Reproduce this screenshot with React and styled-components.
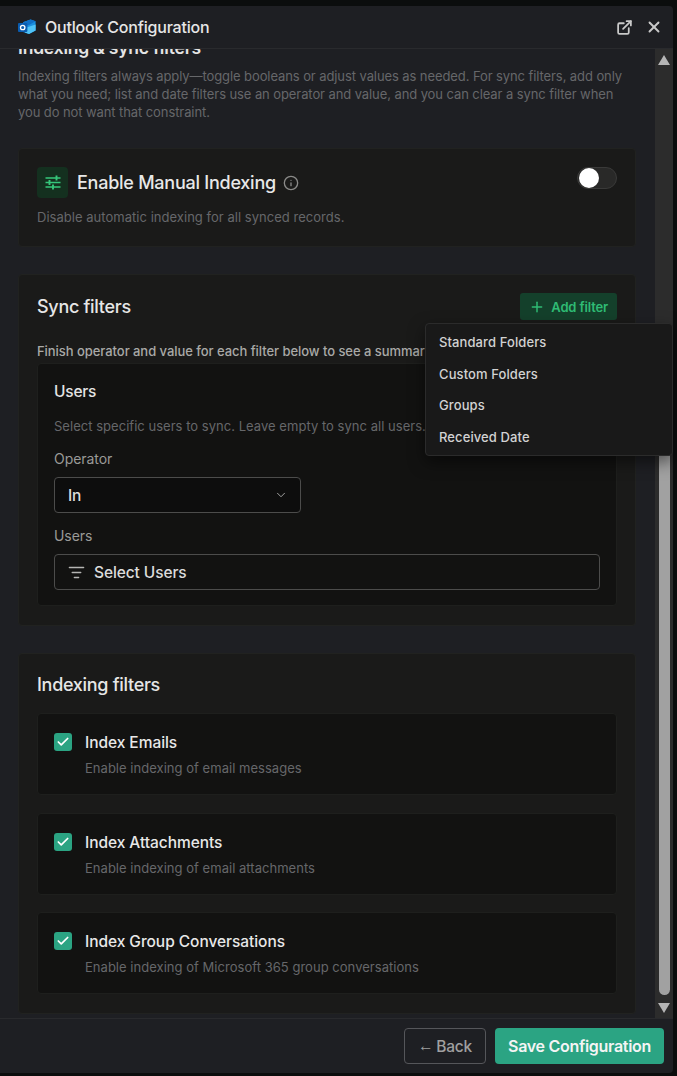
import React from 'react';
import styled, { createGlobalStyle } from 'styled-components';
import { ExternalLink, X, Info, Plus, ChevronDown, ListFilter, Check } from 'lucide-react';

const GlobalStyle = createGlobalStyle`
	html, body {
		margin: 0;
		height: 100%;
		background: #0b0d0d;
		font-family: "Inter", "Noto Sans", sans-serif;
		overflow: hidden;
	}
	* {
		box-sizing: border-box;
	}
`;

const Page = styled.div`
	height: 1076px;
	padding: 6px 4px 3px 0;
`;

const Dialog = styled.div`
	position: relative;
	height: 100%;
	display: flex;
	flex-direction: column;
	background: #1e1f23;
	border-radius: 0 4px 4px 0;
`;

const Header = styled.div`
	height: 43px;
	flex-shrink: 0;
	display: flex;
	align-items: center;
	padding: 0 10px 0 18px;
	border-bottom: 1px solid #292a2d;
`;

const Title = styled.div`
	margin-left: 9px;
	flex: 1;
	font-size: 16px;
	font-weight: 500;
	letter-spacing: -0.2px;
	color: #e6e6e6;
`;

const HeaderButton = styled.div`
	display: flex;
	margin-left: 12px;
	color: #c9c9c9;
`;

const Body = styled.div`
	flex: 1;
	min-height: 0;
	display: flex;
`;

const Content = styled.div`
	flex: 1;
	min-width: 0;
	overflow: hidden;
	padding: 0 19px 0 18px;
`;

const Heading = styled.h2`
	margin: -11px 0 0;
	font-size: 17.5px;
	line-height: 20px;
	font-weight: 600;
	letter-spacing: -0.2px;
	color: #e4e4e4;
`;

const Intro = styled.p`
	margin: 9px 0 27px;
	font-size: 13px;
	line-height: 18px;
	letter-spacing: -0.09px;
	color: #66676a;
`;

const Card = styled.section`
	background: #1a1a19;
	border: 1px solid #212220;
	border-radius: 4px;
	padding: ${p => p.$padding || '18px'};
	margin-bottom: ${p => p.$bottom || '28px'};
`;

const ManualRow = styled.div`
	display: flex;
	justify-content: space-between;
	align-items: flex-start;
`;

const ManualTitle = styled.div`
	display: flex;
	align-items: center;
	gap: 9px;
`;

const IconTile = styled.div`
	width: 31px;
	height: 31px;
	display: flex;
	align-items: center;
	justify-content: center;
	border-radius: 4px;
	background: #14301f;
	color: #36c77b;
`;

const CardTitle = styled.div`
	font-size: 18px;
	font-weight: 500;
	letter-spacing: -0.25px;
	color: #e8e8e8;
`;

const InfoIcon = styled.span`
	display: flex;
	margin-left: -2px;
	color: #8a8a88;
`;

const Toggle = styled.div`
	width: 40px;
	height: 22px;
	padding: 1px;
	border: 1px solid #3a3a39;
	border-radius: 11px;
	background: #292928;
`;

const Knob = styled.div`
	width: 20px;
	height: 20px;
	margin-top: -1px;
	border-radius: 50%;
	background: #fff;
`;

const Muted = styled.p`
	margin: ${p => p.$margin || 0};
	font-size: 13px;
	line-height: 18px;
	letter-spacing: 0.03px;
	color: #66676a;
`;

const SyncHead = styled.div`
	display: flex;
	justify-content: space-between;
	align-items: center;
	height: 27px;
`;

const SectionTitle = styled.div`
	font-size: 18px;
	line-height: 26px;
	font-weight: 500;
	letter-spacing: -0.3px;
	color: #e6e6e6;
`;

const AddButton = styled.div`
	height: 27px;
	padding: 0 9px;
	display: flex;
	align-items: center;
	gap: 6px;
	border-radius: 3px;
	background: #14402b;
	color: #2fbb74;
	font-size: 13px;
	font-weight: 600;
	letter-spacing: -0.15px;
`;

const Summary = styled.div`
	margin: 23px 0 3px;
	font-size: 13px;
	line-height: 17px;
	font-weight: 500;
	letter-spacing: -0.05px;
	color: #a9a9a7;
	white-space: nowrap;
	overflow: hidden;
`;

const InnerCard = styled.div`
	background: #121211;
	border: 1px solid #1e1f1d;
	border-radius: 4px;
	padding: ${p => p.$padding};
	margin-top: ${p => p.$top || 0};
`;

const FilterName = styled.div`
	font-size: 15.5px;
	line-height: 20px;
	font-weight: 500;
	letter-spacing: -0.2px;
	color: #e4e4e4;
`;

const FieldLabel = styled.div`
	margin: ${p => p.$margin};
	font-size: 14px;
	line-height: 18px;
	letter-spacing: -0.05px;
	color: #9a9a98;
`;

const SelectBox = styled.div`
	width: ${p => p.$width || '100%'};
	height: 36px;
	display: flex;
	align-items: center;
	justify-content: ${p => (p.$spread ? 'space-between' : 'flex-start')};
	gap: 9px;
	padding: 0 12px 0 13px;
	border: 1px solid #4c4c4b;
	border-radius: 4px;
	background: ${p => p.$bg};
	color: #dcdcdc;
	font-size: 15.5px;
	font-weight: 500;
	letter-spacing: -0.1px;
	svg {
		flex-shrink: 0;
		color: #b5b5b3;
	}
`;

const CheckRow = styled.div`
	display: flex;
	gap: 13px;
`;

const CheckBox = styled.div`
	width: 18px;
	height: 18px;
	flex-shrink: 0;
	display: flex;
	align-items: center;
	justify-content: center;
	border-radius: 3px;
	background: #2ba483;
	color: #fff;
`;

const CheckLabel = styled.div`
	font-size: 15.5px;
	line-height: 20px;
	font-weight: 500;
	letter-spacing: -0.05px;
	color: #e8e8e8;
`;

const ScrollTrack = styled.div`
	width: 18px;
	flex-shrink: 0;
	display: flex;
	flex-direction: column;
	align-items: center;
	background: #2c2c2c;
`;

const Arrow = styled.div`
	width: 0;
	height: 0;
	margin: ${p => (p.$down ? 'auto 0 5px' : '6px 0 5px')};
	border-left: 6px solid transparent;
	border-right: 6px solid transparent;
	${p => (p.$down ? 'border-top: 10px solid #b5b5b5;' : 'border-bottom: 10px solid #b5b5b5;')}
`;

const Thumb = styled.div`
	width: 11px;
	border-radius: 6px;
	background: #a1a1a1;
	margin-top: ${p => p.$top}px;
	height: ${p => p.$height}px;
`;

const Footer = styled.div`
	height: 55px;
	flex-shrink: 0;
	display: flex;
	justify-content: flex-end;
	align-items: center;
	gap: 9px;
	padding: 0 9px 0 0;
	border-top: 1px solid #292a2d;
`;

const BackButton = styled.div`
	height: 36px;
	width: 82px;
	display: flex;
	align-items: center;
	justify-content: center;
	gap: 3px;
	border: 1px solid #55565a;
	border-radius: 4px;
	color: #a0a0a0;
	font-size: 15.5px;
	font-weight: 500;
	letter-spacing: -0.2px;
`;

const BackArrow = styled.span`
	font-family: "Liberation Sans", sans-serif;
	font-weight: 400;
`;

const SaveButton = styled.div`
	height: 36px;
	width: 169px;
	display: flex;
	align-items: center;
	justify-content: center;
	border-radius: 4px;
	background: #2ba483;
	color: #f4f4f4;
	font-size: 16px;
	font-weight: 600;
	letter-spacing: -0.3px;
`;

const Menu = styled.div`
	position: absolute;
	top: 317px;
	left: 425px;
	width: 248px;
	height: 133px;
	padding: 2px 0;
	background: #191919;
	border: 1px solid #2b2b2b;
	border-radius: 4px;
	box-shadow: 0 6px 16px rgba(0, 0, 0, 0.5);
	z-index: 5;
`;

const MenuItem = styled.div`
	height: 31.75px;
	display: flex;
	align-items: center;
	padding-left: 13px;
	font-size: 13px;
	font-weight: 500;
	letter-spacing: 0.1px;
	color: #d2d2d2;
`;

const indexFilters = [
	{ label: 'Index Emails', hint: 'Enable indexing of email messages' },
	{ label: 'Index Attachments', hint: 'Enable indexing of email attachments' },
	{ label: 'Index Group Conversations', hint: 'Enable indexing of Microsoft 365 group conversations' },
];

const menuItems = ['Standard Folders', 'Custom Folders', 'Groups', 'Received Date'];

function OutlookLogo() {
	return (
		<svg width="18" height="16" viewBox="0 0 18 16">
			<path d="M5 3.2 12.6 0.4 17.6 2.2V11.6L11 15 5 13z" fill="#1a8fe0" />
			<path d="M5 3.2 12.6 0.4 17.6 2.2 11 6 5 7.6z" fill="#0f6fc6" />
			<path d="M7 9 17.6 5.6V11.6L11 15 7 13.6z" fill="#4fc3f7" />
			<rect x="0" y="4" width="9.4" height="9" rx="1" fill="#0a5cb0" />
			<circle cx="4.7" cy="8.5" r="2.2" fill="none" stroke="#fff" strokeWidth="1.3" />
		</svg>
	);
}

function TuneIcon() {
	return (
		<svg width="16" height="15" viewBox="0 0 16 15" fill="none" stroke="currentColor" strokeWidth="1.6">
			<path d="M0.5 3H15.5M0.5 7.5H15.5M0.5 12H15.5" />
			<path d="M11.5 0.5V5.5M4.5 5V10M8 9.5V14.5" strokeWidth="1.9" />
		</svg>
	);
}

export default function App() {
	return (
		<Page>
			<GlobalStyle />
			<Dialog>
				<Header>
					<OutlookLogo />
					<Title>Outlook Configuration</Title>
					<HeaderButton>
						<ExternalLink size={17} strokeWidth={2.5} />
					</HeaderButton>
					<HeaderButton>
						<X size={18} strokeWidth={2.5} />
					</HeaderButton>
				</Header>
				<Body>
					<Content>
						<Heading>Indexing &amp; sync filters</Heading>
						<Intro>
							Indexing filters always apply—toggle booleans or adjust values as needed. For sync filters, add only
							what you need; list and date filters use an operator and value, and you can clear a sync filter when
							you do not want that constraint.
						</Intro>
						<Card $bottom="27px">
							<ManualRow>
								<ManualTitle>
									<IconTile>
										<TuneIcon />
									</IconTile>
									<CardTitle>Enable Manual Indexing</CardTitle>
									<InfoIcon>
										<Info size={16} />
									</InfoIcon>
								</ManualTitle>
								<Toggle>
									<Knob />
								</Toggle>
							</ManualRow>
							<Muted $margin="10px 0 2px">Disable automatic indexing for all synced records.</Muted>
						</Card>
						<Card $padding="18px 18px 19px" $bottom="27px">
							<SyncHead>
								<SectionTitle>Sync filters</SectionTitle>
								<AddButton>
									<Plus size={16} strokeWidth={2.2} />
									Add filter
								</AddButton>
							</SyncHead>
							<Summary>Finish operator and value for each filter below to see a summary of what will be synced.</Summary>
							<InnerCard $padding="18px 16px 15px">
								<FilterName>Users</FilterName>
								<Muted $margin="15px 0 0">Select specific users to sync. Leave empty to sync all users.</Muted>
								<FieldLabel $margin="15px 0 9px">Operator</FieldLabel>
								<SelectBox $width="247px" $spread $bg="#0d0d0d">
									In
									<ChevronDown size={14} strokeWidth={1.5} />
								</SelectBox>
								<FieldLabel $margin="14px 0 9px">Users</FieldLabel>
								<SelectBox $bg="#121211">
									<ListFilter size={17} />
									Select Users
								</SelectBox>
							</InnerCard>
						</Card>
						<Card $padding="18px 18px 19px">
							<SectionTitle>Indexing filters</SectionTitle>
							{indexFilters.map((item, i) => (
								<InnerCard key={item.label} $padding="19px 16px 17px" $top={i === 0 ? '15px' : '17.5px'}>
									<CheckRow>
										<CheckBox>
											<Check size={14} strokeWidth={3} />
										</CheckBox>
										<div>
											<CheckLabel>{item.label}</CheckLabel>
											<Muted $margin="6px 0 0">{item.hint}</Muted>
										</div>
									</CheckRow>
								</InnerCard>
							))}
						</Card>
					</Content>
					<ScrollTrack>
						<Arrow />
						<Thumb $top={370} $height={555} />
						<Arrow $down />
					</ScrollTrack>
				</Body>
				<Footer>
					<BackButton>
						<BackArrow>←</BackArrow>
						Back
					</BackButton>
					<SaveButton>Save Configuration</SaveButton>
				</Footer>
				<Menu>
					{menuItems.map(item => (
						<MenuItem key={item}>{item}</MenuItem>
					))}
				</Menu>
			</Dialog>
		</Page>
	);
}
